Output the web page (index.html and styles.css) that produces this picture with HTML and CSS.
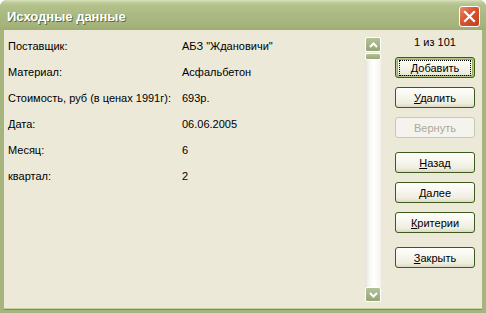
FILE: index.html
```html
<!DOCTYPE html>
<html lang="ru">
<head>
    <meta charset="UTF-8">
    <title>Исходные данные</title>
    <link rel="stylesheet" href="styles.css">
</head>
<body>

<div class="window">
    <div class="titlebar">
        <span class="title">Исходные данные</span>
        <button class="close" type="button" aria-label="Закрыть">
            <svg width="13" height="13" viewBox="0 0 13 13">
                <path d="M2 2 L11 11 M11 2 L2 11" stroke="#fff" stroke-width="2.2" stroke-linecap="square"/>
            </svg>
        </button>
    </div>

    <div class="client">
        <div class="fields">
            <div class="label">Поставщик:</div>
            <div class="value">АБЗ "Ждановичи"</div>
            <div class="label">Материал:</div>
            <div class="value">Асфальбетон</div>
            <div class="label">Стоимость, руб (в ценах 1991г):</div>
            <div class="value">693р.</div>
            <div class="label">Дата:</div>
            <div class="value">06.06.2005</div>
            <div class="label">Месяц:</div>
            <div class="value">6</div>
            <div class="label">квартал:</div>
            <div class="value">2</div>
        </div>

        <div class="scrollbar">
            <div class="arrow">
                <svg width="9" height="6" viewBox="0 0 9 6"><path d="M1 5 L4.5 1.5 L8 5" fill="none" stroke="#fff" stroke-width="2"/></svg>
            </div>
            <div class="thumb"></div>
            <div class="track"></div>
            <div class="arrow">
                <svg width="9" height="6" viewBox="0 0 9 6"><path d="M1 1 L4.5 4.5 L8 1" fill="none" stroke="#fff" stroke-width="2"/></svg>
            </div>
        </div>

        <div class="actions">
            <div class="counter">1 из 101</div>
            <button class="btn default" type="button"><span class="focus"><u>Д</u>обавить</span></button>
            <button class="btn" type="button"><u>У</u>далить</button>
            <button class="btn" type="button" disabled>Вернуть</button>
            <button class="btn group" type="button"><u>Н</u>азад</button>
            <button class="btn" type="button"><u>Д</u>алее</button>
            <button class="btn" type="button"><u>К</u>ритерии</button>
            <button class="btn group" type="button"><u>З</u>акрыть</button>
        </div>
    </div>
</div>

</body>
</html>
```

FILE: styles.css
```css
body {
    margin: 0;
    padding: 0;
    background: #ffffff;
    font-family: "Liberation Sans", Arial, sans-serif;
    font-size: 11px;
    color: #000;
}
.window {
    width: 486px;
    height: 313px;
    display: flex;
    flex-direction: column;
    border-radius: 7px 7px 0 0;
    overflow: hidden;
    background: #a6b57e;
}
.titlebar {
    height: 30px;
    flex: none;
    display: flex;
    align-items: center;
    justify-content: space-between;
    padding: 0 6px 0 7px;
    box-sizing: border-box;
    background: linear-gradient(#dbe3bb 0, #c3cf9f 2px, #b3c18b 5px, #abba83 14px, #a6b57d 24px, #9cac72 30px);
}
.title {
    color: #fff;
    font-family: "Liberation Sans", Arial, sans-serif;
    font-weight: bold;
    font-size: 13px;
    text-shadow: 1px 1px 0 #5d6b3b;
    margin-top: 2px;
}
.close {
    width: 21px;
    height: 21px;
    padding: 0;
    border: 1px solid #fff;
    border-radius: 3px;
    background: linear-gradient(135deg, #e88a6c 0, #d9532e 45%, #c2401c 100%);
    display: flex;
    align-items: center;
    justify-content: center;
    margin-top: 2px;
}
.client {
    flex: 1;
    display: flex;
    margin: 0 4px 5px 4px;
    background: #ece9d8;
    box-shadow: 0 1px 0 #c7d2a4, 0 2px 0 #7b9150;
}
.fields {
    width: 357px;
    padding: 3px 0 0 4px;
    display: grid;
    grid-template-columns: 174px 1fr;
    grid-auto-rows: 26px;
    align-content: start;
    align-items: center;
    white-space: nowrap;
}
.scrollbar {
    width: 16px;
    margin: 7px 0 6px;
    display: flex;
    flex-direction: column;
}
.arrow {
    height: 15px;
    flex: none;
    box-sizing: border-box;
    border: 1px solid #fff;
    border-radius: 2px;
    background: linear-gradient(#b4c198, #94a578);
    display: flex;
    align-items: center;
    justify-content: center;
}
.thumb {
    height: 7px;
    margin-top: 1px;
    box-sizing: border-box;
    border: 1px solid #fff;
    border-radius: 2px;
    background: linear-gradient(#b3c196, #97a77b);
}
.track {
    flex: 1;
    background: linear-gradient(to right, #e4e3d9 0, #f8f8f4 30%, #ffffff 55%, #f4f3ee 100%);
}
.actions {
    margin-left: 14px;
    width: 80px;
    display: flex;
    flex-direction: column;
}
.counter {
    height: 27px;
    line-height: 24px;
    text-align: center;
}
.btn {
    width: 80px;
    height: 21px;
    padding: 0;
    margin-bottom: 9px;
    font: inherit;
    color: #000;
    border: 1px solid #3b5a1c;
    border-radius: 3px;
    background: linear-gradient(#fefefb 0, #f8f7ef 40%, #efedde 80%, #dcd9c3 100%);
}
.btn.group {
    margin-top: 5px;
}
.btn.default {
    box-shadow: inset 0 0 0 1px #b7c98a, inset 0 0 0 2px #93b256;
}
.btn.default .focus {
    display: block;
    margin: 0 3px;
    padding: 1px 0;
    border: 1px dotted #000;
}
.btn:disabled {
    color: #aca899;
    border-color: #c9c7ba;
    background: #f4f3ee;
}
```
